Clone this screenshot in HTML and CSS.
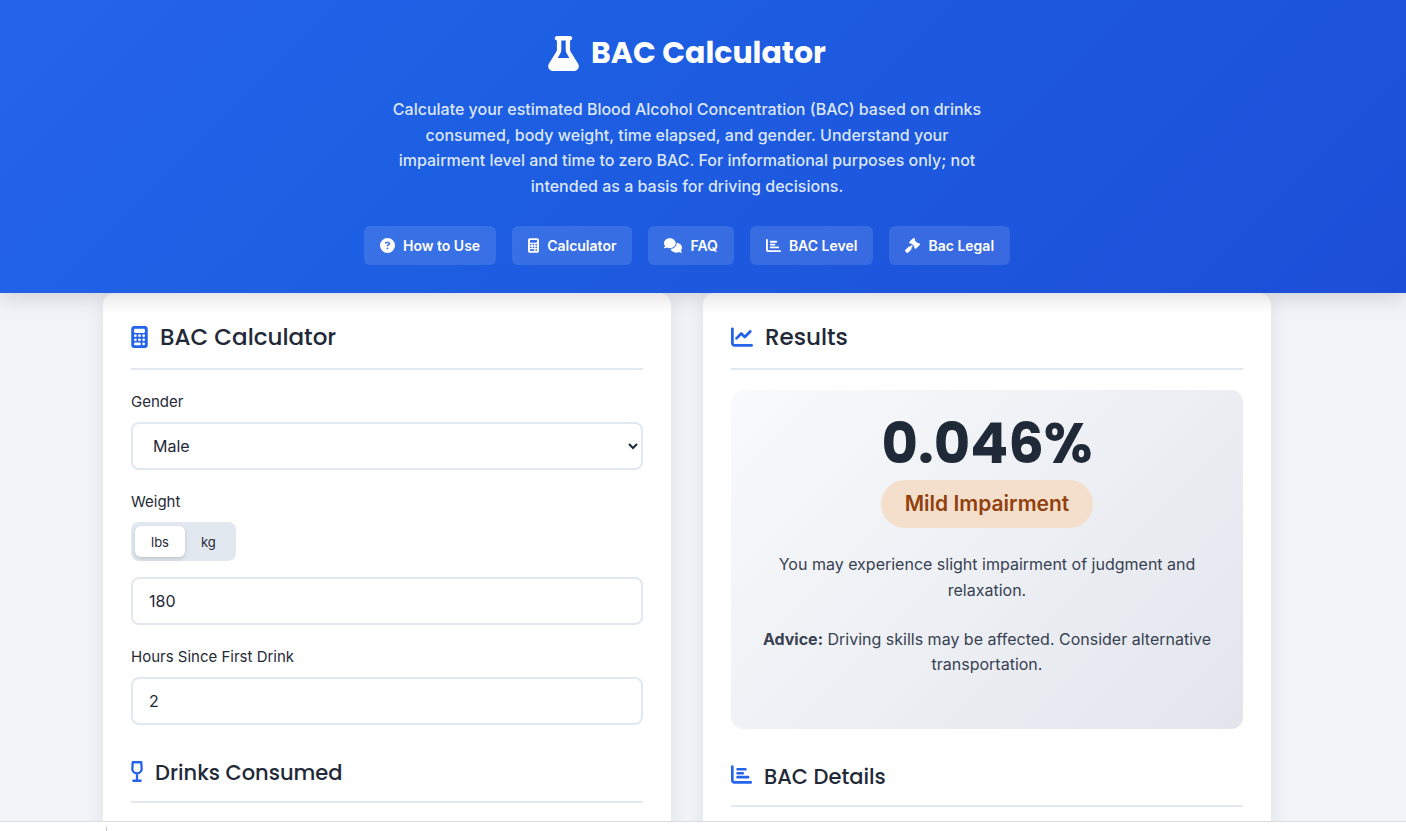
FILE: index.html
```
<!DOCTYPE html>
<html lang="en">
<head>
    <meta charset="UTF-8">
    <meta name="viewport" content="width=device-width, initial-scale=1.0">
    <title>BAC Calculator</title>
    <link rel="stylesheet" href="styles.css">
</head>
<body>
    <svg class="sprite" aria-hidden="true">
        <symbol id="flask" viewBox="0 0 448 512"><path d="M288 0H160 128C110.3 0 96 14.3 96 32s14.3 32 32 32V196.8c0 11.8-3.3 23.5-9.5 33.5L10.3 406.2C3.6 417.2 0 429.7 0 442.6C0 480.9 31.1 512 69.4 512H378.6c38.3 0 69.4-31.1 69.4-69.4c0-12.8-3.6-25.4-10.3-36.4L329.5 230.4c-6.2-10.1-9.5-21.7-9.5-33.5V64c17.7 0 32-14.3 32-32s-14.3-32-32-32H288zM192 196.8V64h64V196.8c0 23.7 6.6 46.9 19 67.1L309.5 320h-171L173 263.9c12.4-20.2 19-43.4 19-67.1z"/></symbol>
        <symbol id="calculator" viewBox="0 0 384 512"><path d="M64 0C28.7 0 0 28.7 0 64V448c0 35.3 28.7 64 64 64H320c35.3 0 64-28.7 64-64V64c0-35.3-28.7-64-64-64H64zM96 64H288c17.7 0 32 14.3 32 32v32c0 17.7-14.3 32-32 32H96c-17.7 0-32-14.3-32-32V96c0-17.7 14.3-32 32-32zm32 160a32 32 0 1 1-64 0 32 32 0 1 1 64 0zM96 352a32 32 0 1 1 0-64 32 32 0 1 1 0 64zM64 416c0-17.7 14.3-32 32-32h96c17.7 0 32 14.3 32 32s-14.3 32-32 32H96c-17.7 0-32-14.3-32-32zM192 256a32 32 0 1 1 0-64 32 32 0 1 1 0 64zm32 64a32 32 0 1 1-64 0 32 32 0 1 1 64 0zm64-64a32 32 0 1 1 0-64 32 32 0 1 1 0 64zm32 64a32 32 0 1 1-64 0 32 32 0 1 1 64 0zM288 448a32 32 0 1 1 0-64 32 32 0 1 1 0 64z"/></symbol>
        <symbol id="question" viewBox="0 0 512 512"><path d="M256 512A256 256 0 1 0 256 0a256 256 0 1 0 0 512zM169.8 165.3c7.9-22.3 29.1-37.3 52.8-37.3h58.3c34.9 0 63.1 28.3 63.1 63.1c0 22.6-12.1 43.5-31.7 54.8L280 264.4c-.2 13-10.9 23.6-24 23.6c-13.3 0-24-10.7-24-24V250.5c0-8.6 4.6-16.5 12.1-20.8l44.3-25.4c4.7-2.7 7.6-7.7 7.6-13.1c0-8.4-6.8-15.1-15.1-15.1H222.6c-3.4 0-6.4 2.1-7.5 5.3l-.4 1.2c-4.4 12.5-18.2 19-30.6 14.6s-19-18.2-14.6-30.6l.4-1.2zM224 352a32 32 0 1 1 64 0 32 32 0 1 1-64 0z"/></symbol>
        <symbol id="comments" viewBox="0 0 640 512"><path d="M208 352c114.9 0 208-78.8 208-176S322.9 0 208 0S0 78.8 0 176c0 38.6 14.7 74.3 39.6 103.4c-3.5 9.4-8.7 17.7-14.2 24.7c-4.8 6.2-9.7 11-13.3 14.3c-1.8 1.6-3.3 2.9-4.3 3.7c-.5 .4-.9 .7-1.1 .8l-.2 .2C1 327.2-1.4 334.4 .8 340.9S9.1 352 16 352c21.8 0 43.8-5.6 62.1-12.5c9.2-3.5 17.8-7.4 25.2-11.4C134.1 343.3 169.8 352 208 352zM448 176c0 112.3-99.1 196.9-216.5 207C255.8 457.4 336.4 512 432 512c38.2 0 73.9-8.7 104.7-23.9c7.5 4 16 7.9 25.2 11.4c18.3 6.9 40.3 12.5 62.1 12.5c6.9 0 13.1-4.5 15.2-11.1c2.1-6.6-.2-13.8-5.8-17.9l-.2-.2c-.2-.2-.6-.4-1.1-.8c-1-.8-2.5-2-4.3-3.7c-3.6-3.3-8.5-8.1-13.3-14.3c-5.5-7-10.7-15.4-14.2-24.7c24.9-29 39.6-64.7 39.6-103.4c0-92.8-84.9-168.9-192.6-175.5c.4 5.1 .6 10.3 .6 15.5z"/></symbol>
        <symbol id="chart-bar" viewBox="0 0 512 512"><path d="M32 32c17.7 0 32 14.3 32 32V400c0 8.8 7.2 16 16 16H480c17.7 0 32 14.3 32 32s-14.3 32-32 32H80c-44.2 0-80-35.8-80-80V64C0 46.3 14.3 32 32 32zM128 128c0-17.7 14.3-32 32-32l192 0c17.7 0 32 14.3 32 32s-14.3 32-32 32l-192 0c-17.7 0-32-14.3-32-32zm32 64H288c17.7 0 32 14.3 32 32s-14.3 32-32 32H160c-17.7 0-32-14.3-32-32s14.3-32 32-32zm0 96H416c17.7 0 32 14.3 32 32s-14.3 32-32 32H160c-17.7 0-32-14.3-32-32s14.3-32 32-32z"/></symbol>
        <symbol id="chart-line" viewBox="0 0 512 512"><path d="M64 64c0-17.7-14.3-32-32-32S0 46.3 0 64V400c0 44.2 35.8 80 80 80H480c17.7 0 32-14.3 32-32s-14.3-32-32-32H80c-8.8 0-16-7.2-16-16V64zm406.6 86.6c12.5-12.5 12.5-32.8 0-45.3s-32.8-12.5-45.3 0L320 210.7l-57.4-57.4c-12.5-12.5-32.8-12.5-45.3 0l-112 112c-12.5 12.5-12.5 32.8 0 45.3s32.8 12.5 45.3 0L240 221.3l57.4 57.4c12.5 12.5 32.8 12.5 45.3 0l128-128z"/></symbol>
        <symbol id="gavel" viewBox="0 0 512 512"><path d="M318.6 9.4c-12.5-12.5-32.8-12.5-45.3 0l-120 120c-12.5 12.5-12.5 32.8 0 45.3l16 16c12.5 12.5 32.8 12.5 45.3 0l4-4L325.4 293.4l-4 4c-12.5 12.5-12.5 32.8 0 45.3l16 16c12.5 12.5 32.8 12.5 45.3 0l120-120c12.5-12.5 12.5-32.8 0-45.3l-16-16c-12.5-12.5-32.8-12.5-45.3 0l-4 4L330.6 74.6l4-4c12.5-12.5 12.5-32.8 0-45.3l-16-16zm-152 288c-12.5-12.5-32.8-12.5-45.3 0l-112 112c-12.5 12.5-12.5 32.8 0 45.3l48 48c12.5 12.5 32.8 12.5 45.3 0l112-112c12.5-12.5 12.5-32.8 0-45.3l-1.4-1.4L272 285.3 226.7 240 168 298.7l-1.4-1.4z"/></symbol>
        <symbol id="glass" viewBox="0 0 288 512"><path d="M40 30H248L258 190C260 254 208 300 144 300S28 254 30 190ZM144 300V482M54 482H234" fill="none" stroke="currentColor" stroke-width="56" stroke-linecap="round" stroke-linejoin="round"/></symbol>
    </svg>

    <header class="header">
        <h1><svg class="icon-flask"><use href="#flask"/></svg>BAC Calculator</h1>
        <p>Calculate your estimated Blood Alcohol Concentration (BAC) based on drinks consumed, body weight, time elapsed, and gender. Understand your impairment level and time to zero BAC. For informational purposes only; not intended as a basis for driving decisions.</p>
        <nav class="nav">
            <a href="#how-to-use"><svg class="icon-sq"><use href="#question"/></svg>How to Use</a>
            <a href="#calc"><svg class="icon-calc"><use href="#calculator"/></svg>Calculator</a>
            <a href="#faq"><svg class="icon-wide"><use href="#comments"/></svg>FAQ</a>
            <a href="#details"><svg class="icon-sq"><use href="#chart-bar"/></svg>BAC Level</a>
            <a href="#legal"><svg class="icon-sq"><use href="#gavel"/></svg>Bac Legal</a>
        </nav>
    </header>

    <main class="content">
        <div class="container">
            <section class="card" id="calc">
                <h2><svg class="icon-calc"><use href="#calculator"/></svg>BAC Calculator</h2>
                <div class="form-group">
                    <label for="gender">Gender</label>
                    <select id="gender">
                        <option>Male</option>
                        <option>Female</option>
                    </select>
                </div>
                <div class="form-group">
                    <label for="weight">Weight</label>
                    <div class="unit-toggle">
                        <button type="button" class="active">lbs</button>
                        <button type="button">kg</button>
                    </div>
                    <input type="text" inputmode="numeric" id="weight" value="180">
                </div>
                <div class="form-group">
                    <label for="hours">Hours Since First Drink</label>
                    <input type="text" inputmode="numeric" id="hours" value="2">
                </div>
                <h3 class="drinks-title"><svg class="icon-glass"><use href="#glass"/></svg>Drinks Consumed</h3>
            </section>

            <section class="card">
                <h2><svg class="icon-sq"><use href="#chart-line"/></svg>Results</h2>
                <div class="result">
                    <div class="bac-value">0.046%</div>
                    <div class="bac-status">Mild Impairment</div>
                    <p>You may experience slight impairment of judgment and relaxation.</p>
                    <p><strong>Advice:</strong> Driving skills may be affected. Consider alternative transportation.</p>
                </div>
                <h3 id="details"><svg class="icon-sq"><use href="#chart-bar"/></svg>BAC Details</h3>
            </section>
        </div>
    </main>

    <div class="bottom-bar"></div>

    <script>
        const unitButtons = document.querySelectorAll(".unit-toggle button");
        unitButtons.forEach(button => {
            button.addEventListener("click", () => {
                unitButtons.forEach(b => b.classList.remove("active"));
                button.classList.add("active");
            });
        });
    </script>
</body>
</html>
```
FILE: styles.css
```
* {
    box-sizing: border-box;
    margin: 0;
    padding: 0;
}
body {
    height: 100vh;
    display: flex;
    flex-direction: column;
    overflow: hidden;
    background: #f0f4f9;
    color: #1f2937;
    font-family: Inter, sans-serif;
    font-size: 16px;
    line-height: 1.6;
}
.sprite { display: none; }
svg {
    fill: currentColor;
    flex-shrink: 0;
}

/* header */
.header {
    z-index: 1;
    display: flex;
    flex-direction: column;
    align-items: center;
    padding: 25px 48px 28px 16px;
    background: linear-gradient(135deg, #2563eb 0%, #1d5fe3 35%, #1d4ed8 100%);
    color: white;
    box-shadow: 0 4px 20px rgba(0, 0, 0, 0.15);
}
h1, h2, h3, .bac-value { font-family: Poppins, Inter, sans-serif; }
h1 {
    display: flex;
    align-items: center;
    gap: 12px;
    margin-bottom: 16px;
    font-size: 30px;
    line-height: 56px;
}
.header p {
    max-width: 600px;
    margin-bottom: 27px;
    text-align: center;
    font-weight: 500;
    color: #dbe6fb;
}
.nav {
    display: flex;
    flex-wrap: wrap;
    justify-content: center;
    gap: 16px;
}
.nav a {
    display: flex;
    align-items: center;
    gap: 8px;
    padding: 8px 16px;
    border-radius: 6px;
    background: rgba(255, 255, 255, 0.12);
    color: white;
    font-size: 14px;
    font-weight: 600;
    line-height: 23px;
    text-decoration: none;
}
.nav a:hover { background: rgba(255, 255, 255, 0.2); }
.icon-flask { width: 31px; height: 35px; }
.nav .icon-sq { width: 15px; height: 15px; }
.nav .icon-calc { width: 11px; height: 15px; }
.nav .icon-wide { width: 18px; height: 15px; }

/* columns */
.content {
    flex: 1;
    min-height: 0;
    overflow-y: auto;
    scrollbar-width: none;
    padding: 0 48px 0 16px;
}
.container {
    display: grid;
    grid-template-columns: 1fr 1fr;
    gap: 32px;
    max-width: 1168px;
    margin: 0 auto;
}
.card {
    padding: 25px 28px 64px;
    border-radius: 12px;
    background: white;
    box-shadow: 0 4px 20px rgba(0, 0, 0, 0.08);
}
h2, h3 {
    display: flex;
    align-items: center;
    gap: 12px;
    margin-bottom: 20px;
    padding-bottom: 12px;
    border-bottom: 2px solid #e2e8f0;
    font-size: 23px;
    font-weight: 500;
    line-height: 38px;
}
h3 {
    font-size: 21px;
    line-height: 32px;
}
h2 svg, h3 svg { color: #2563eb; }
h3 svg { margin-bottom: 4px; }
h2 .icon-calc { width: 17px; height: 22px; }
h2 .icon-sq { width: 22px; height: 22px; }
h3 .icon-sq { width: 21px; height: 21px; }
h3 .icon-glass { width: 12px; height: 21px; }
.drinks-title { margin-top: 32px; }

/* form */
.form-group { margin-bottom: 20px; }
label {
    display: block;
    margin-bottom: 8px;
    font-size: 15px;
    line-height: 24px;
}
input, select {
    display: block;
    width: 100%;
    height: 48px;
    padding: 0 16px;
    border: 2px solid #e2e8f0;
    border-radius: 8px;
    background: white;
    color: #1f2937;
    font-family: inherit;
    font-size: 16px;
}
select { padding: 0 0 0 16px; }
.unit-toggle {
    display: inline-flex;
    margin-bottom: 16px;
    padding: 4px;
    border-radius: 8px;
    background: #e2e8f0;
    vertical-align: top;
}
.unit-toggle button {
    height: 31px;
    padding: 0 16px;
    border: none;
    border-radius: 6px;
    background: transparent;
    color: #1f2937;
    font-family: inherit;
    font-size: 13px;
    cursor: pointer;
}
.unit-toggle .active {
    background: white;
    box-shadow: 0 2px 4px rgba(0, 0, 0, 0.15);
}

/* results */
.result {
    display: flex;
    flex-direction: column;
    align-items: center;
    margin-bottom: 32px;
    padding: 24px 28px 28px;
    border-radius: 12px;
    background: linear-gradient(135deg, #f8fafc, #e2e5ec);
    text-align: center;
}
.bac-value {
    font-size: 56px;
    font-weight: 700;
    line-height: 60px;
    margin-bottom: 6px;
}
.bac-status {
    margin-bottom: 24px;
    padding: 8px 24px;
    border-radius: 24px;
    background: #f3dfcc;
    color: #92400e;
    font-size: 21px;
    font-weight: 600;
    line-height: 32px;
}
.result p {
    margin-bottom: 23px;
    color: #374151;
}

.bottom-bar {
    z-index: 1;
    height: 10px;
    border-top: 1px solid #dadce0;
    background: white;
}
.bottom-bar::before {
    content: "";
    display: block;
    width: 1px;
    height: 4px;
    margin: 5px 0 0 106px;
    background: #c4c7cc;
}
```
